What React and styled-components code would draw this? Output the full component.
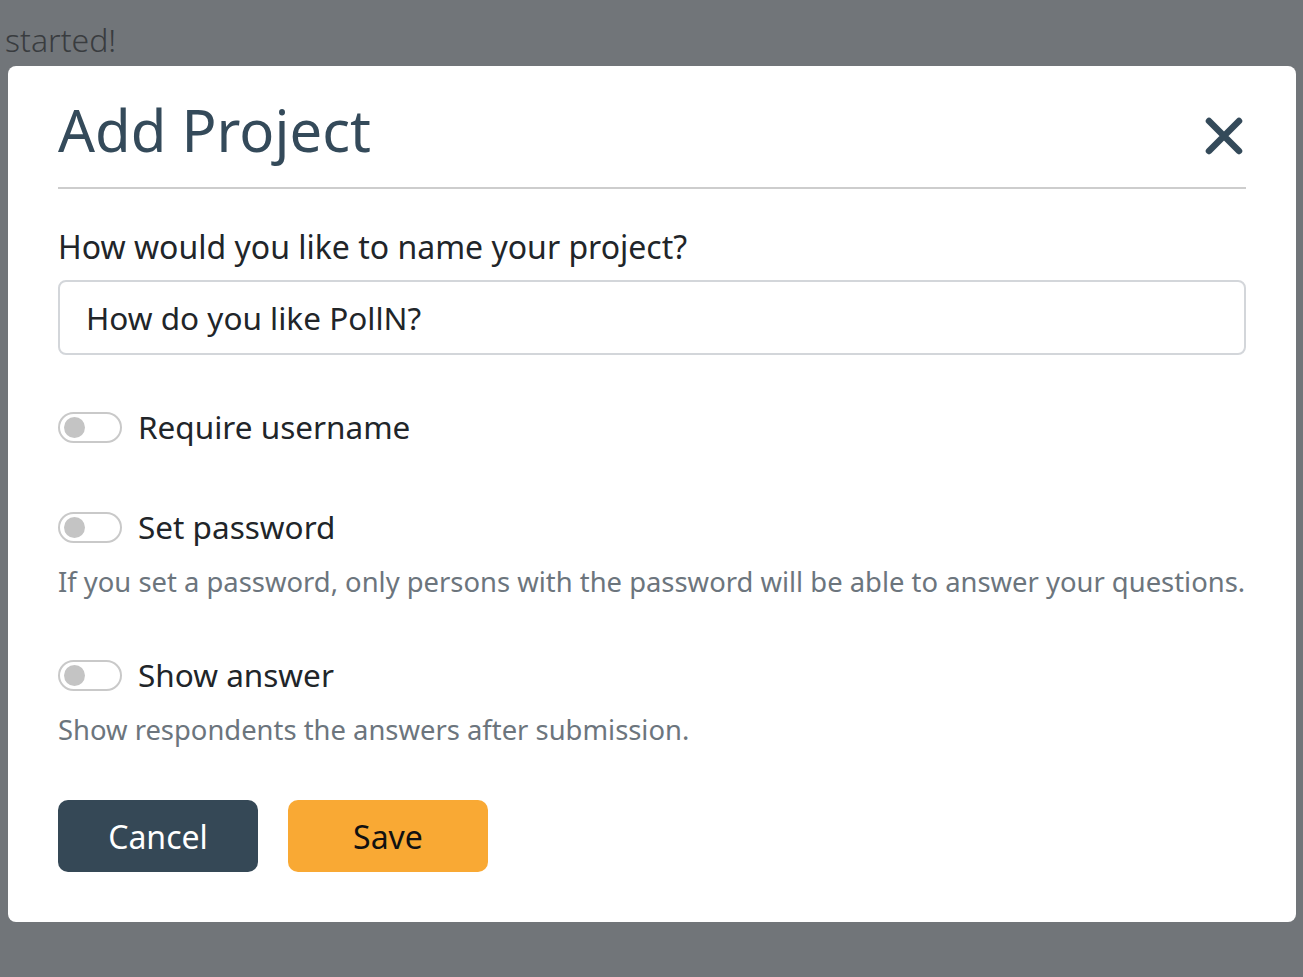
import React from "react";
import styled, { createGlobalStyle } from "styled-components";

const GlobalStyle = createGlobalStyle`
  html, body {
    margin: 0;
    padding: 0;
    background: #717579;
    font-family: "Noto Sans", "Open Sans", sans-serif;
  }
  * { box-sizing: border-box; }
`;

const Page = styled.div`
  min-height: 100vh;
  padding: 0 7px 0 8px;
  background: #717579;
  overflow: hidden;
`;

const BehindText = styled.p`
  margin: 0 0 0 -8px;
  padding: 18px 0 0 5px;
  height: 66px;
  font-size: 32px;
  line-height: 44px;
  color: #393c3f;
  font-weight: 300;
`;

const Modal = styled.div`
  background: #fff;
  border-radius: 8px;
  padding: 0 50px 50px;
`;

const Header = styled.div`
  display: flex;
  align-items: center;
  justify-content: space-between;
  height: 123px;
  padding-top: 6px;
  border-bottom: 2px solid #cdcdcd;
`;

const Title = styled.h1`
  margin: 0;
  font-size: 58px;
  font-weight: 400;
  color: #344a5a;
`;

const CloseButton = styled.button`
  border: 0;
  background: none;
  padding: 0;
  margin-top: 12px;
  margin-right: 2px;
  cursor: pointer;
  display: flex;
`;

const Body = styled.div`
  padding-top: 38px;
`;

const Label = styled.label`
  display: block;
  font-size: 32px;
  color: #212529;
  line-height: 40px;
`;

const Input = styled.input`
  display: block;
  width: 100%;
  height: 75px;
  margin-top: 13px;
  padding: 0 26px;
  border: 2px solid #d3d6da;
  border-radius: 8px;
  font-family: inherit;
  font-size: 31.5px;
  color: #212529;
  outline: none;
`;

const Option = styled.div`
  margin-top: ${(p) => p.$gap}px;
`;

const ToggleRow = styled.label`
  display: flex;
  align-items: center;
  gap: 16px;
  font-size: 31.5px;
  line-height: 40px;
  color: #212529;
  height: 40px;
`;

const Track = styled.span`
  width: 64px;
  height: 31px;
  border: 2px solid #c9c9c9;
  border-radius: 16px;
  display: flex;
  align-items: center;
  padding-left: 4px;
  flex-shrink: 0;
`;

const Knob = styled.span`
  width: 21px;
  height: 21px;
  border-radius: 50%;
  background: #c4c4c4;
`;

const Hint = styled.p`
  margin: 18px 0 0;
  font-size: 27.4px;
  line-height: 34px;
  color: #6c757d;
  white-space: nowrap;
`;

const Actions = styled.div`
  display: flex;
  gap: 30px;
  margin-top: 53px;
`;

const Button = styled.button`
  width: 200px;
  height: 72px;
  border: 0;
  border-radius: 10px;
  font-family: inherit;
  font-size: 32px;
  background: ${(p) => (p.$primary ? "#f9a934" : "#354856")};
  color: ${(p) => (p.$primary ? "#111" : "#fff")};
  cursor: pointer;
`;

const Toggle = ({ label }) => (
  <ToggleRow>
    <Track>
      <Knob />
    </Track>
    {label}
  </ToggleRow>
);

export default function App() {
  return (
    <>
      <GlobalStyle />
      <Page>
        <BehindText>started!</BehindText>
        <Modal>
          <Header>
            <Title>Add Project</Title>
            <CloseButton aria-label="Close">
              <svg width="40" height="40" viewBox="0 0 40 40">
                <path
                  d="M5 5 L35 35 M35 5 L5 35"
                  stroke="#344a5a"
                  strokeWidth="6.5"
                  strokeLinecap="round"
                />
              </svg>
            </CloseButton>
          </Header>
          <Body>
            <Label>How would you like to name your project?</Label>
            <Input defaultValue="How do you like PollN?" />
            <Option $gap={52}>
              <Toggle label="Require username" />
            </Option>
            <Option $gap={60}>
              <Toggle label="Set password" />
              <Hint>
                If you set a password, only persons with the password will be
                able to answer your questions.
              </Hint>
            </Option>
            <Option $gap={56}>
              <Toggle label="Show answer" />
              <Hint>Show respondents the answers after submission.</Hint>
            </Option>
            <Actions>
              <Button>Cancel</Button>
              <Button $primary>Save</Button>
            </Actions>
          </Body>
        </Modal>
      </Page>
    </>
  );
}
